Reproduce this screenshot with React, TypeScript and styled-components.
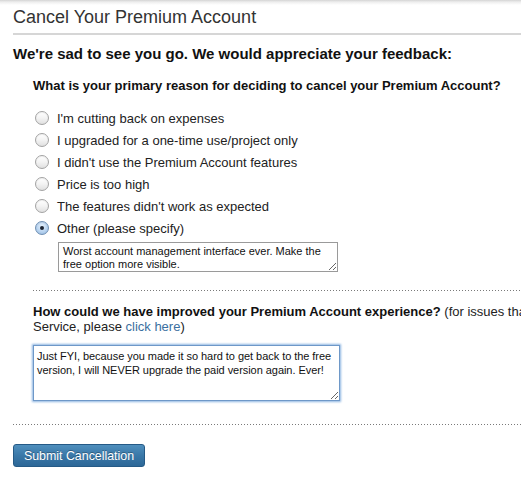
import React from "react";
import styled, { createGlobalStyle } from "styled-components";

const Global = createGlobalStyle`
  html, body { margin: 0; padding: 0; background: #fff; }
  body {
    overflow: hidden;
    font-family: "Liberation Sans", Arial, Helvetica, sans-serif;
    color: #222;
  }
`;

const Page = styled.div`
  position: relative;
  width: 760px;
  min-height: 478px;
  padding: 0 0 0 13px;
  box-sizing: border-box;
  background: linear-gradient(to bottom, #d4d4d4 0px, #eeeeee 2px, #ffffff 5px);
`;

const Header = styled.div`
  padding-top: 6px;
  padding-bottom: 5px;
  border-bottom: 2px solid #d6d6d6;
`;

const Title = styled.h1`
  margin: 0;
  font-size: 18px;
  line-height: 22px;
  font-weight: normal;
  color: #333;
`;

const Lead = styled.h2`
  margin: 10px 0 0;
  font-size: 15px;
  line-height: 18px;
  font-weight: bold;
  color: #111;
`;

const Section = styled.div`
  padding-left: 20px;
`;

const Question = styled.div`
  font-size: 13px;
  line-height: 16px;
  font-weight: bold;
  color: #111;
  margin-top: 15px;
`;

const Options = styled.div`
  margin-top: 13px;
  display: flex;
  flex-direction: column;
`;

const Option = styled.label`
  display: flex;
  align-items: center;
  height: 22px;
  gap: 8px;
  padding-left: 2px;
  font-size: 13px;
  color: #222;
`;

const Radio = styled.span<{ $checked?: boolean }>`
  position: relative;
  width: 14px;
  height: 14px;
  border-radius: 50%;
  box-sizing: border-box;
  flex: none;
  border: 1px solid ${(p) => (p.$checked ? "#6f8fb3" : "#a3a3a3")};
  background: ${(p) =>
    p.$checked
      ? "radial-gradient(circle at 50% 35%, #e6f1fc 0%, #b9d4f0 55%, #8fb4dc 100%)"
      : "linear-gradient(to bottom, #ffffff 0%, #f3f3f3 50%, #e0e0e0 100%)"};
  box-shadow: inset 0 1px 1px rgba(0, 0, 0, 0.06);
  &::after {
    content: "";
    display: ${(p) => (p.$checked ? "block" : "none")};
    position: absolute;
    left: 50%;
    top: 50%;
    width: 4px;
    height: 4px;
    margin: -2px 0 0 -2px;
    border-radius: 50%;
    background: #1d2533;
  }
`;

const SmallArea = styled.textarea`
  display: block;
  margin: 3px 0 0 25px;
  width: 280px;
  height: 30px;
  box-sizing: border-box;
  border: 1px solid #9a9a9a;
  padding: 2px 4px;
  font-family: "Liberation Sans", Arial, sans-serif;
  font-size: 11px;
  line-height: 13px;
  color: #111;
  resize: both;
  outline: none;
  overflow: hidden;
`;

const Dotted = styled.div<{ $mt: number }>`
  height: 1px;
  margin-top: ${(p) => p.$mt}px;
  background-image: linear-gradient(to right, #7a7a7a 1px, transparent 1px);
  background-size: 3px 1px;
  background-repeat: repeat-x;
`;

const Improve = styled.p`
  margin: 13px 0 0;
  font-size: 13px;
  line-height: 15px;
  color: #222;
  white-space: nowrap;
  b {
    color: #111;
  }
`;

const Link = styled.a`
  color: #3b6fa0;
  text-decoration: none;
`;

const BigArea = styled.textarea`
  display: block;
  margin-top: 11px;
  width: 307px;
  height: 56px;
  box-sizing: border-box;
  border: 1px solid #6e98c8;
  box-shadow: 0 0 2px 1px #8fb6e2;
  padding: 3px 1px 2px 3px;
  font-family: "Liberation Sans", Arial, sans-serif;
  font-size: 11px;
  line-height: 14px;
  letter-spacing: -0.05px;
  color: #111;
  resize: both;
  outline: none;
  overflow: hidden;
`;

const Button = styled.button`
  margin-top: 19px;
  height: 23px;
  width: 132px;
  border: 1px solid #255a86;
  border-radius: 3px;
  background: linear-gradient(to bottom, #4f8fbd 0%, #3a78a8 50%, #2c6797 100%);
  color: #fff;
  font-family: "Liberation Sans", Arial, sans-serif;
  font-size: 12.4px;
  font-weight: normal;
  text-shadow: 0 -1px 0 rgba(0, 0, 0, 0.3);
  padding: 0;
  cursor: pointer;
`;

const reasons = [
  "I'm cutting back on expenses",
  "I upgraded for a one-time use/project only",
  "I didn't use the Premium Account features",
  "Price is too high",
  "The features didn't work as expected",
  "Other (please specify)",
];

export default function App() {
  return (
    <>
      <Global />
      <Page>
        <Header>
          <Title>Cancel Your Premium Account</Title>
        </Header>
        <Lead>We're sad to see you go. We would appreciate your feedback:</Lead>
        <Section>
          <Question>What is your primary reason for deciding to cancel your Premium Account?</Question>
          <Options>
            {reasons.map((r, i) => (
              <Option key={r}>
                <Radio $checked={i === reasons.length - 1} />
                {r}
              </Option>
            ))}
          </Options>
          <SmallArea
            readOnly
            defaultValue="Worst account management interface ever. Make the free option more visible."
          />
          <Dotted $mt={18} />
          <Improve>
            <b>How could we have improved your Premium Account experience?</b> (for issues that require help from our Customer
            <br />
            Service, please <Link href="#">click here</Link>)
          </Improve>
          <BigArea
            readOnly
            defaultValue="Just FYI, because you made it so hard to get back to the free version, I will NEVER upgrade the paid version again. Ever!"
          />
        </Section>
        <Dotted $mt={23} />
        <Button type="button">Submit Cancellation</Button>
      </Page>
    </>
  );
}
